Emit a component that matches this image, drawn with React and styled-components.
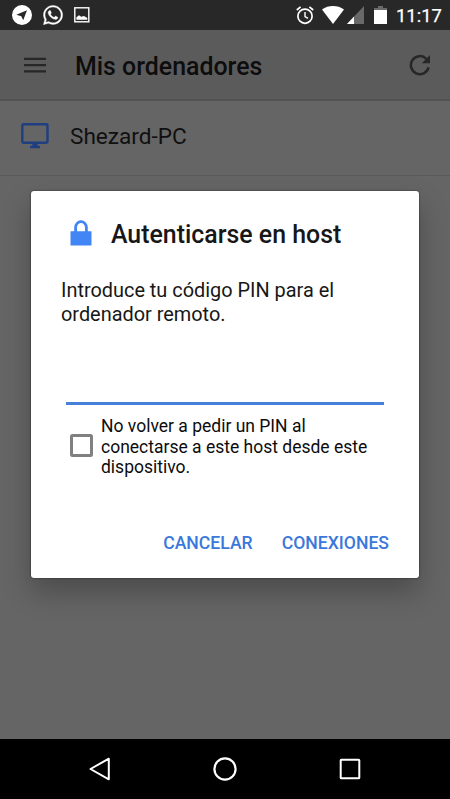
import React, { useState } from 'react';
import styled, { createGlobalStyle } from 'styled-components';
import { FaWhatsapp } from 'react-icons/fa';

const GlobalStyle = createGlobalStyle`
  * {
    box-sizing: border-box;
  }

  body {
    margin: 0;
    background-color: #656565;
    font-family: Roboto, 'Liberation Sans', sans-serif;
  }
`;

const Screen = styled.div`
  position: relative;
  display: flex;
  flex-direction: column;
  width: 450px;
  height: 799px;
  overflow: hidden;
  background-color: #656565;
`;

const StatusBar = styled.header`
  display: flex;
  justify-content: space-between;
  height: 30px;
  padding: 0 10px 0 12px;
  background-color: #282828;
  color: #ffffff;
`;

const StatusGroup = styled.div`
  display: flex;
  align-items: center;
  gap: ${props => props.$gap}px;

  svg {
    display: block;
    flex: none;
  }
`;

const WhatsappIcon = styled(FaWhatsapp)`
  stroke: #ffffff;
  stroke-width: 8px;
  overflow: visible;
`;

const Clock = styled.span`
  width: 44px;
  margin: 1px 0 0 2px;
  font-size: 18.4px;
  font-weight: 400;
  -webkit-text-stroke: 0.25px #ffffff;
  line-height: 30px;
  white-space: nowrap;
`;

const AppBar = styled.div`
  display: flex;
  align-items: center;
  height: 71px;
  padding: 0 19px 0 23px;
  background-color: #5b5b5b;
  border-bottom: 2px solid #525252;
  color: #272727;

  svg {
    flex: none;
  }
`;

const AppTitle = styled.h1`
  flex: 1;
  margin: 4px 0 0 28px;
  color: #0d0d0d;
  font-size: 24.9px;
  font-weight: 500;
  line-height: 30px;
`;

const HostRow = styled.div`
  display: flex;
  align-items: center;
  height: 75px;
  padding: 0 21px;
  border-bottom: 1px solid #595959;

  svg {
    margin-top: -5px;
  }
`;

const HostName = styled.span`
  margin: -3px 0 0 21px;
  color: #101010;
  font-size: 22.6px;
  line-height: 28px;
`;

const DialogLayer = styled.div`
  position: absolute;
  inset: 30px 0 60px;
  padding: 161px 31px 0;
`;

const Dialog = styled.section`
  display: flex;
  flex-direction: column;
  height: 386.5px;
  padding: 28px 30px 0;
  border-radius: 3px;
  background-color: #ffffff;
  box-shadow: 0 0 2px rgba(0, 0, 0, 0.65), 0 14px 28px rgba(0, 0, 0, 0.26);
`;

const DialogHeader = styled.div`
  display: flex;
  align-items: center;
  height: 30px;
  padding-left: 9px;

  svg {
    flex: none;
    margin-top: -2px;
  }
`;

const DialogTitle = styled.h2`
  margin: 1px 0 0 19px;
  color: #171717;
  font-size: 24.9px;
  font-weight: 500;
  line-height: 30px;
`;

const DialogText = styled.p`
  margin: 30px 0 0;
  color: #171717;
  font-size: 19.9px;
  line-height: 23.7px;
`;

const PinInput = styled.input`
  flex: none;
  width: 318px;
  height: 51px;
  margin: 27.6px 0 0 5px;
  padding: 0 4px;
  border: none;
  border-bottom: 3px solid #4680da;
  border-radius: 0;
  outline: none;
  background: transparent;
  font-size: 20px;
`;

const RememberRow = styled.label`
  display: flex;
  align-items: center;
  margin-top: 11px;
  padding-left: 9px;
`;

const Checkbox = styled.input`
  flex: none;
  appearance: none;
  width: 23px;
  height: 23px;
  margin: -2px 8px 0 0;
  border: 3px solid #808080;
  border-radius: 2.5px;

  &:checked {
    background-color: #4285f4;
    border-color: #4285f4;
  }
`;

const RememberText = styled.span`
  width: 280px;
  color: #0c0c0c;
  font-size: 17.5px;
  line-height: 20.5px;
`;

const Actions = styled.div`
  display: flex;
  justify-content: flex-end;
  gap: 29px;
  margin-top: 54.5px;
`;

const ActionButton = styled.button`
  padding: 0;
  border: none;
  background: none;
  color: #3b78dc;
  font-family: inherit;
  font-size: 17.6px;
  font-weight: 500;
  line-height: 22px;
  cursor: pointer;
`;

const NavBar = styled.nav`
  display: flex;
  justify-content: center;
  gap: 101px;
  height: 60px;
  margin-top: auto;
  background-color: #000000;
`;

const NavButton = styled.button`
  display: flex;
  align-items: center;
  justify-content: center;
  width: 24px;
  height: 60px;
  padding: 0;
  border: none;
  background: none;
  cursor: pointer;

  svg {
    flex: none;
  }
`;

function TelegramIcon() {
  return (
    <svg width="20" height="20" viewBox="0 0 20 20">
      <circle cx="10" cy="10" r="10" fill="#fff" />
      <path d="M4.3 9.8 15 5.2 11.2 15.3 9.3 11.2Z" fill="#282828" />
    </svg>
  );
}

function PictureIcon() {
  return (
    <svg width="16" height="16" viewBox="0 0 16 16">
      <rect x="0.8" y="0.8" width="14" height="14" fill="none" stroke="#fff" strokeWidth="1.4" />
      <path d="M2.4 12.8V10.3L5 8.2 7.2 9.8 10 9 13.3 11V12.8Z" fill="#fff" />
    </svg>
  );
}

function AlarmIcon() {
  return (
    <svg width="18" height="20" viewBox="0 0 18 20" fill="none" stroke="#fff" strokeWidth="1.7">
      <circle cx="9" cy="11.2" r="7.1" />
      <path d="M9 7V11.5L12 13.4" strokeWidth="1.4" />
      <path d="M0.8 5 4.6 1.8M17.2 5 13.4 1.8" />
    </svg>
  );
}

function WifiIcon() {
  return (
    <svg width="22" height="18" viewBox="0 0 22 18">
      <path d="M0 3.4C6.4-1.1 15.6-1.1 22 3.4L11 18Z" fill="#fff" />
    </svg>
  );
}

function SignalIcon() {
  return (
    <svg width="17" height="18" viewBox="0 0 17 18">
      <path d="M17 0V18H0Z" fill="#696969" />
      <path d="M7 10.6V18H0Z" fill="#fff" />
    </svg>
  );
}

function BatteryIcon() {
  return (
    <svg width="13" height="18" viewBox="0 0 13 18">
      <path d="M4 0H9V2H13V5H0V2H4Z" fill="#696969" />
      <path d="M0 4H13V18H0Z" fill="#fff" />
    </svg>
  );
}

function MenuIcon() {
  return (
    <svg width="24" height="16" viewBox="0 0 24 16">
      <path d="M1 1.8H23M1 8.1H23M1 14.3H23" stroke="#272727" strokeWidth="2.3" />
    </svg>
  );
}

function RefreshIcon() {
  return (
    <svg width="22" height="22" viewBox="0 0 22 22">
      <path d="M19.6 13.4A9 9 0 1 1 17.3 4.8" fill="none" stroke="#272727" strokeWidth="2.5" />
      <path d="M21 1V9.2H12.8Z" fill="#272727" />
    </svg>
  );
}

function MonitorIcon() {
  return (
    <svg width="28" height="26" viewBox="0 0 28 26">
      <rect x="1.3" y="1.3" width="25.2" height="18.4" rx="1.2" fill="none" stroke="#1f3f80" strokeWidth="2.4" />
      <path d="M11.4 20H16.6V22.8H19V25.2H9V22.8H11.4Z" fill="#1f3f80" />
    </svg>
  );
}

function LockIcon() {
  return (
    <svg width="22" height="26" viewBox="0 0 22 26">
      <path d="M5.6 12V7.4A5.4 5.7 0 0 1 16.4 7.4V12" fill="none" stroke="#4285f4" strokeWidth="2.8" />
      <rect x="0.5" y="11.2" width="21" height="14.2" rx="0.5" fill="#4285f4" />
    </svg>
  );
}

function App() {
  const [pin, setPin] = useState('');
  const [remember, setRemember] = useState(false);

  return (
    <>
      <GlobalStyle />
      <Screen>
        <StatusBar>
          <StatusGroup $gap={10}>
            <TelegramIcon />
            <WhatsappIcon size={22} />
            <PictureIcon />
          </StatusGroup>
          <StatusGroup $gap={10}>
            <StatusGroup $gap={8}>
              <AlarmIcon />
              <StatusGroup $gap={3}>
                <WifiIcon />
                <SignalIcon />
              </StatusGroup>
            </StatusGroup>
            <StatusGroup $gap={7}>
              <BatteryIcon />
              <Clock>11:17</Clock>
            </StatusGroup>
          </StatusGroup>
        </StatusBar>

        <AppBar>
          <MenuIcon />
          <AppTitle>Mis ordenadores</AppTitle>
          <RefreshIcon />
        </AppBar>

        <HostRow>
          <MonitorIcon />
          <HostName>Shezard-PC</HostName>
        </HostRow>

        <DialogLayer>
          <Dialog role="dialog">
            <DialogHeader>
              <LockIcon />
              <DialogTitle>Autenticarse en host</DialogTitle>
            </DialogHeader>
            <DialogText>
              Introduce tu código PIN para el ordenador remoto.
            </DialogText>
            <PinInput
              type="password"
              value={pin}
              onChange={e => setPin(e.target.value)}
            />
            <RememberRow>
              <Checkbox
                type="checkbox"
                checked={remember}
                onChange={e => setRemember(e.target.checked)}
              />
              <RememberText>
                No volver a pedir un PIN al conectarse a este host desde este dispositivo.
              </RememberText>
            </RememberRow>
            <Actions>
              <ActionButton>CANCELAR</ActionButton>
              <ActionButton>CONEXIONES</ActionButton>
            </Actions>
          </Dialog>
        </DialogLayer>

        <NavBar>
          <NavButton>
            <svg width="24" height="24" viewBox="0 0 24 24">
              <path d="M2.5 12 20.8 1.7V22.3Z" fill="none" stroke="#fff" strokeWidth="2" strokeLinejoin="round" />
            </svg>
          </NavButton>
          <NavButton>
            <svg width="24" height="24" viewBox="0 0 24 24">
              <circle cx="12" cy="12" r="10.6" fill="none" stroke="#fff" strokeWidth="2.2" />
            </svg>
          </NavButton>
          <NavButton>
            <svg width="24" height="24" viewBox="0 0 24 24">
              <rect x="2.7" y="2.7" width="18.6" height="18.6" rx="0.6" fill="none" stroke="#fff" strokeWidth="2" />
            </svg>
          </NavButton>
        </NavBar>
      </Screen>
    </>
  );
}

export default App;
